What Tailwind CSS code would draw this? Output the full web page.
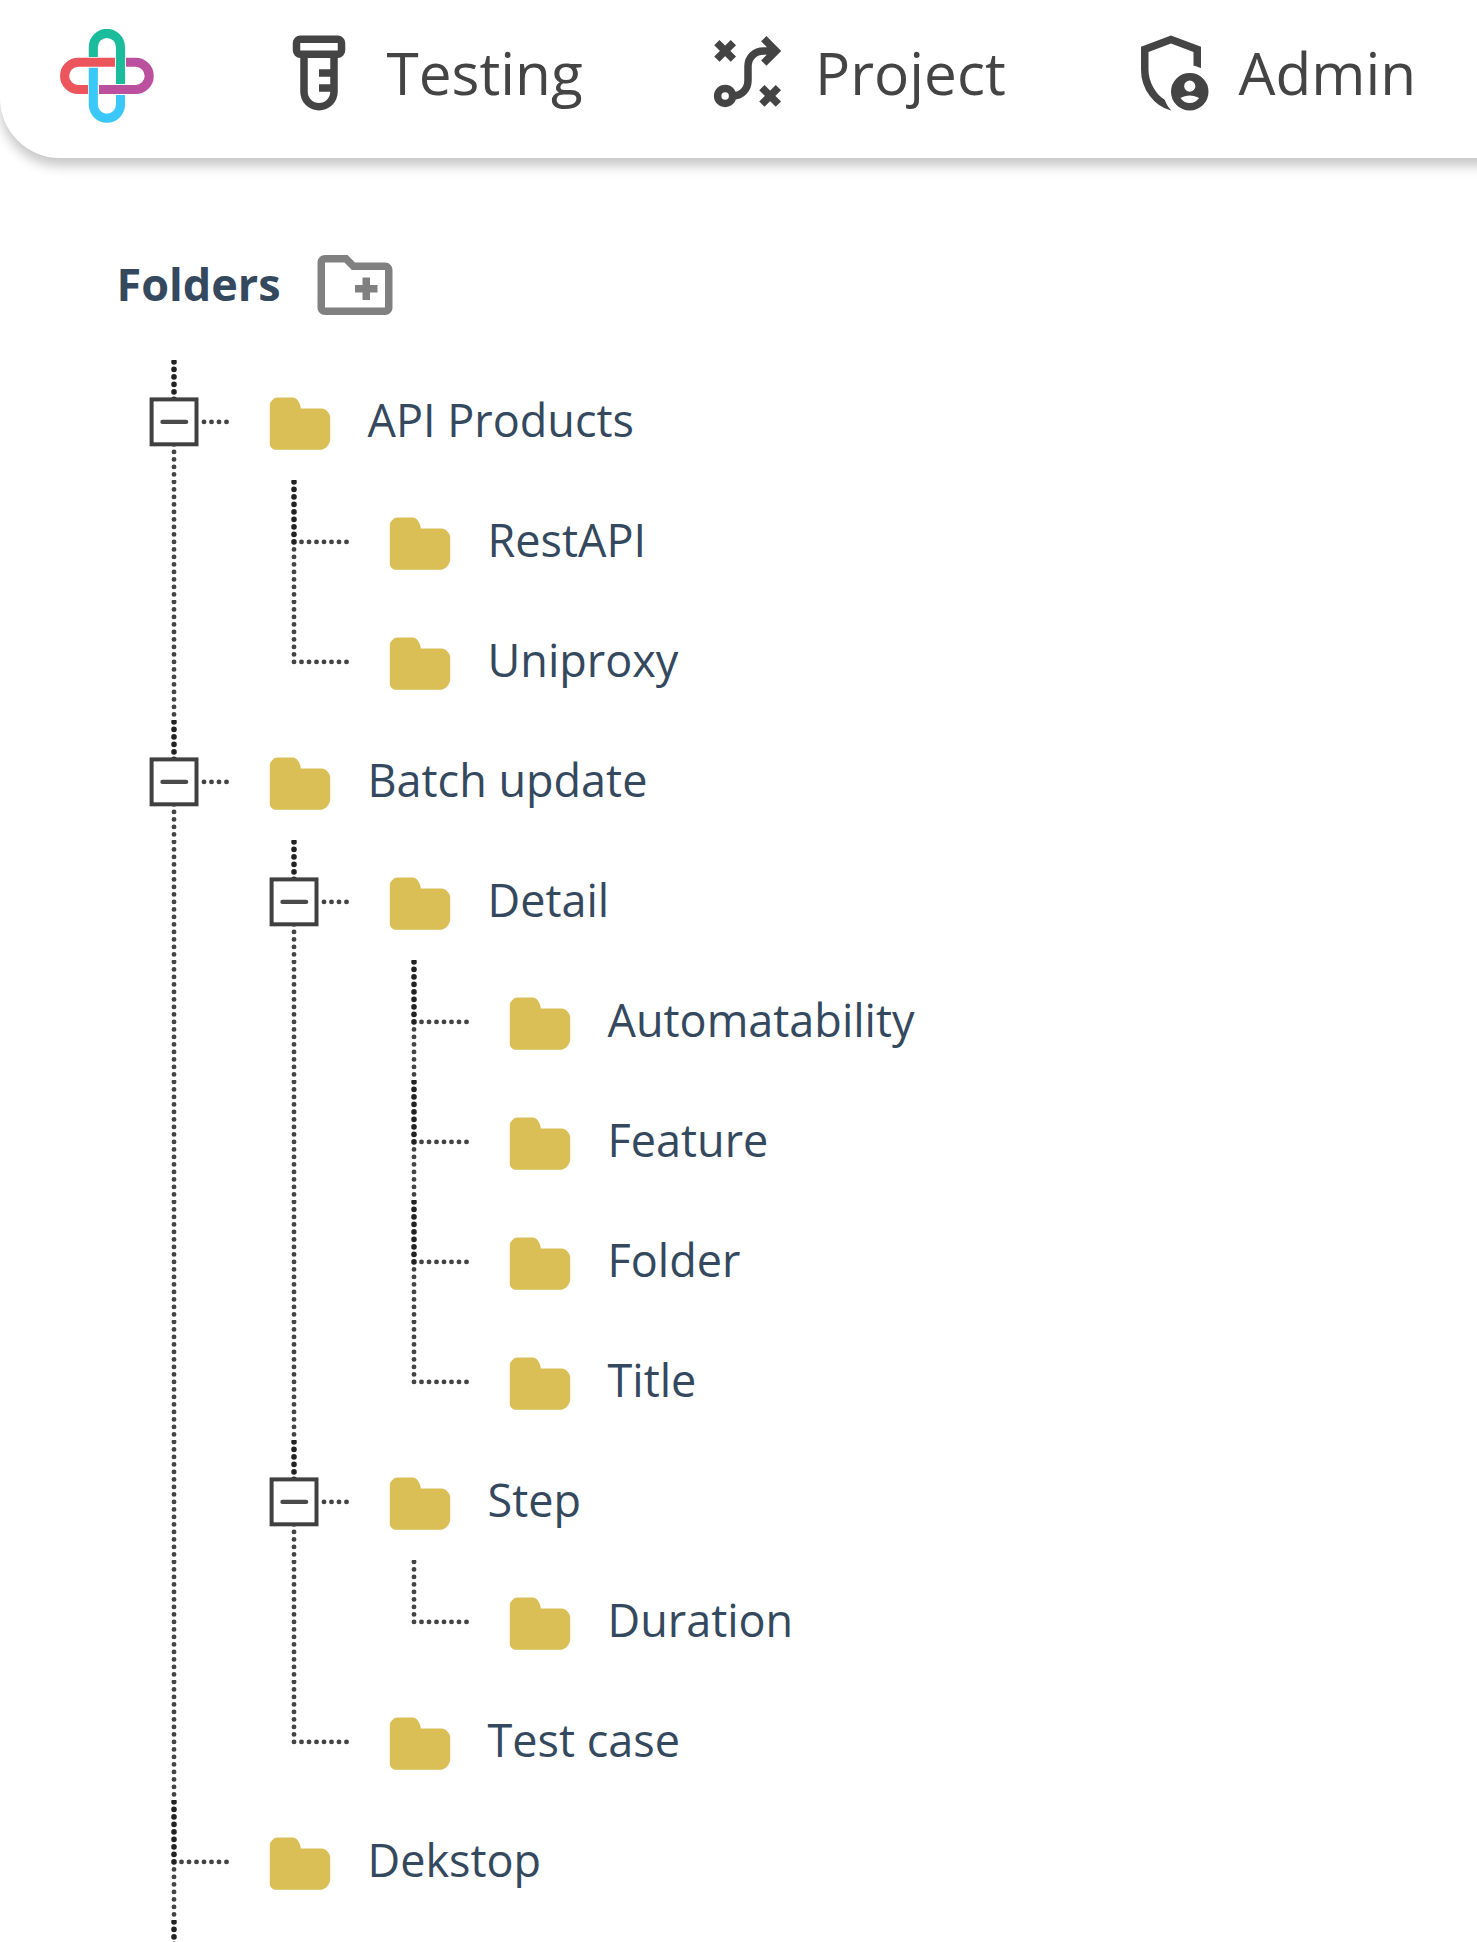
<!DOCTYPE html>
<html lang="en" class="overflow-hidden">
<head>
<meta charset="utf-8">
<title>Folders</title>
<script src="https://cdn.jsdelivr.net/npm/@tailwindcss/browser@4"></script>
</head>
<body class="h-[1942px] overflow-hidden bg-white font-['Open_Sans',sans-serif]">

<svg class="hidden">
  <defs>
    <!-- vertical guide passing through a row -->
    <symbol id="g-v" viewBox="0 0 120 120">
      <path d="M60 1.875V120" stroke="#444" stroke-width="4.9" stroke-linecap="round" stroke-dasharray="0 7.5"/>
    </symbol>
    <!-- branch with siblings below -->
    <symbol id="g-t" viewBox="0 0 120 120">
      <path d="M60 69.375V120M67.5 61.875H113" stroke="#444" stroke-width="4.9" stroke-linecap="round" stroke-dasharray="0 7.5"/>
      <path d="M60 1.875V62.5" stroke="#222" stroke-width="5.6" stroke-linecap="round" stroke-dasharray="0 7.5"/>
    </symbol>
    <!-- last branch -->
    <symbol id="g-l" viewBox="0 0 120 120">
      <path d="M60 1.875V62.5M67.5 61.875H113" stroke="#444" stroke-width="4.9" stroke-linecap="round" stroke-dasharray="0 7.5"/>
    </symbol>
    <!-- expanded branch with collapse box -->
    <symbol id="g-b" viewBox="0 0 120 120">
      <path d="M60 84.375V120M90 61.875H113" stroke="#444" stroke-width="4.9" stroke-linecap="round" stroke-dasharray="0 7.5"/>
      <path d="M60 1.875V40" stroke="#222" stroke-width="5.6" stroke-linecap="round" stroke-dasharray="0 7.5"/>
      <rect x="37.6" y="39.4" width="44.9" height="44.9" fill="#fff" stroke="#404040" stroke-width="4"/>
      <path d="M48.4 61.875H72.2" stroke="#4a4a4a" stroke-width="4.2" stroke-linecap="round"/>
    </symbol>
    <symbol id="folder" viewBox="0 0 120 120">
      <path fill="#dabf57" d="M43 37.5H59C62 37.5 66.3 42 66.8 48.6H88C91 48.6 96.2 53 96.2 57V80C96.2 84 91 89.8 87 89.8H41.5C39 89.8 35.8 87 35.8 84V45C35.8 42 40 37.5 43 37.5Z"/>
    </symbol>
  </defs>
</svg>

<header class="flex h-[158px] w-[1490px] items-start rounded-bl-[60px] bg-white pl-[60px] text-[58.5px] leading-[90px] text-[#444] shadow-[0_7.5px_11.25px_rgba(0,0,0,0.22)]">
  <svg class="mt-[29px] mr-[120px] h-[94px] w-[94px] shrink-0" viewBox="60 29 94 94" fill="none" stroke-width="9.1">
    <path stroke="#1abc9c" d="M93.3 57V47a13.6 13.6 0 0 1 27.2 0V84"/>
    <path stroke="#3ac8f8" d="M93.3 67.7V104.6a13.6 13.6 0 0 0 27.2 0V95"/>
    <path stroke="#ed555d" d="M115 62.3H78.2a13.6 13.6 0 0 0 0 27.2H88"/>
    <path stroke="#bb509f" d="M126 62.3H135.6a13.6 13.6 0 0 1 0 27.2H99"/>
  </svg>
  <nav class="flex pt-[27px]">
    <a class="flex w-[428.5px] gap-[22.5px]">
      <svg class="mt-[0.5px] h-[90px] w-[90px]" viewBox="0 0 24 24" fill="currentColor" fill-rule="evenodd">
        <path d="M7 2H17A2 2 0 0 1 19 4V6A2 2 0 0 1 17 8V17A5 5 0 0 1 7 17V8A2 2 0 0 1 5 6V4A2 2 0 0 1 7 2ZM7 4V6H17V4ZM9 8V17A3 3 0 0 0 15 17H12V15H15V13H12V11H15V8Z"/>
      </svg>
      <span>Testing</span>
    </a>
    <a class="flex w-[423.5px] gap-[22.5px]">
      <svg class="mt-[0.5px] h-[90px] w-[90px]" viewBox="0 0 24 24" fill="none" stroke="currentColor" stroke-width="2">
        <path d="M3.7 3.9L8.1 8.3M8.1 3.9L3.7 8.3M15.7 15.9L20.1 20.3M20.1 15.9L15.7 20.3"/>
        <circle cx="5.9" cy="18.1" r="2"/>
        <path d="M8.1 18.1C10.3 18.1 12 16.3 12 14V10.2C12 7.8 13.8 6.1 16.2 6.1H19.4M16.2 2.85L19.45 6.1L16.2 9.35"/>
      </svg>
      <span>Project</span>
    </a>
    <a class="flex gap-[22.5px]">
      <svg class="mt-[0.5px] h-[90px] w-[90px]" viewBox="0 -960 960 960" fill="currentColor" fill-rule="evenodd">
        <path d="M680-280q25 0 42.5-17.5T740-340q0-25-17.5-42.5T680-400q-25 0-42.5 17.5T620-340q0 25 17.5 42.5T680-280Zm0 120q31 0 57-14.5t42-38.5q-22-13-47-20t-52-7q-27 0-52 7t-47 20q16 24 42 38.5t57 14.5ZM480-80q-139-35-229.5-159.5T160-516v-244l320-120 320 120v227q-19-8-39-14.5t-41-9.5v-147l-240-90-240 90v188q0 47 12.5 94t35 89.5Q310-290 342-254t71 60q11 32 29 61t41 52q-1 0-1.5.5t-1.5.5Zm200 0q-83 0-141.5-58.5T480-280q0-83 58.5-141.5T680-480q83 0 141.5 58.5T880-280q0 83-58.5 141.5T680-80Z"/>
      </svg>
      <span>Admin</span>
    </a>
  </nav>
</header>

<main class="pt-[82px] text-[45px] leading-[120px] text-[#34495e]">
  <div class="flex h-[120px] pl-[116.5px]">
    <h1 class="-mt-[16px] w-[193.8px] font-bold whitespace-nowrap">Folders</h1>
    <svg class="h-[90px] w-[90px]" viewBox="0 0 24 24" fill="#808080">
      <path d="M20 6h-8l-2-2H4c-1.11 0-1.99.89-1.99 2L2 18c0 1.11.89 2 2 2h16c1.11 0 2-.89 2-2V8c0-1.11-.89-2-2-2zm0 12H4V6h5.17l2 2H20v10zm-8-4h2v2h2v-2h2v-2h-2v-2h-2v2h-2z"/>
    </svg>
  </div>
  <ul id="tree" class="h-[1582px] overflow-hidden pl-[114px]"></ul>
</main>

<script>
  // guide columns per row: v = pass-through, t = branch, l = last branch, b = expanded branch
  const rows = [
    ['b', 'API Products'],
    ['vt', 'RestAPI'],
    ['vl', 'Uniproxy'],
    ['b', 'Batch update'],
    ['vb', 'Detail'],
    ['vvt', 'Automatability'],
    ['vvt', 'Feature'],
    ['vvt', 'Folder'],
    ['vvl', 'Title'],
    ['vb', 'Step'],
    ['vvl', 'Duration'],
    ['vl', 'Test case'],
    ['t', 'Dekstop'],
    ['t', '']
  ];
  const cell = id => `<svg class="h-[120px] w-[120px] shrink-0"><use href="#${id}"/></svg>`;
  document.getElementById('tree').innerHTML = rows.map(([guides, name]) =>
    `<li class="flex h-[120px]">${[...guides].map(g => cell('g-' + g)).join('')}${cell('folder')}<span class="pl-[13.5px] whitespace-nowrap">${name}</span></li>`
  ).join('');
</script>
</body>
</html>
